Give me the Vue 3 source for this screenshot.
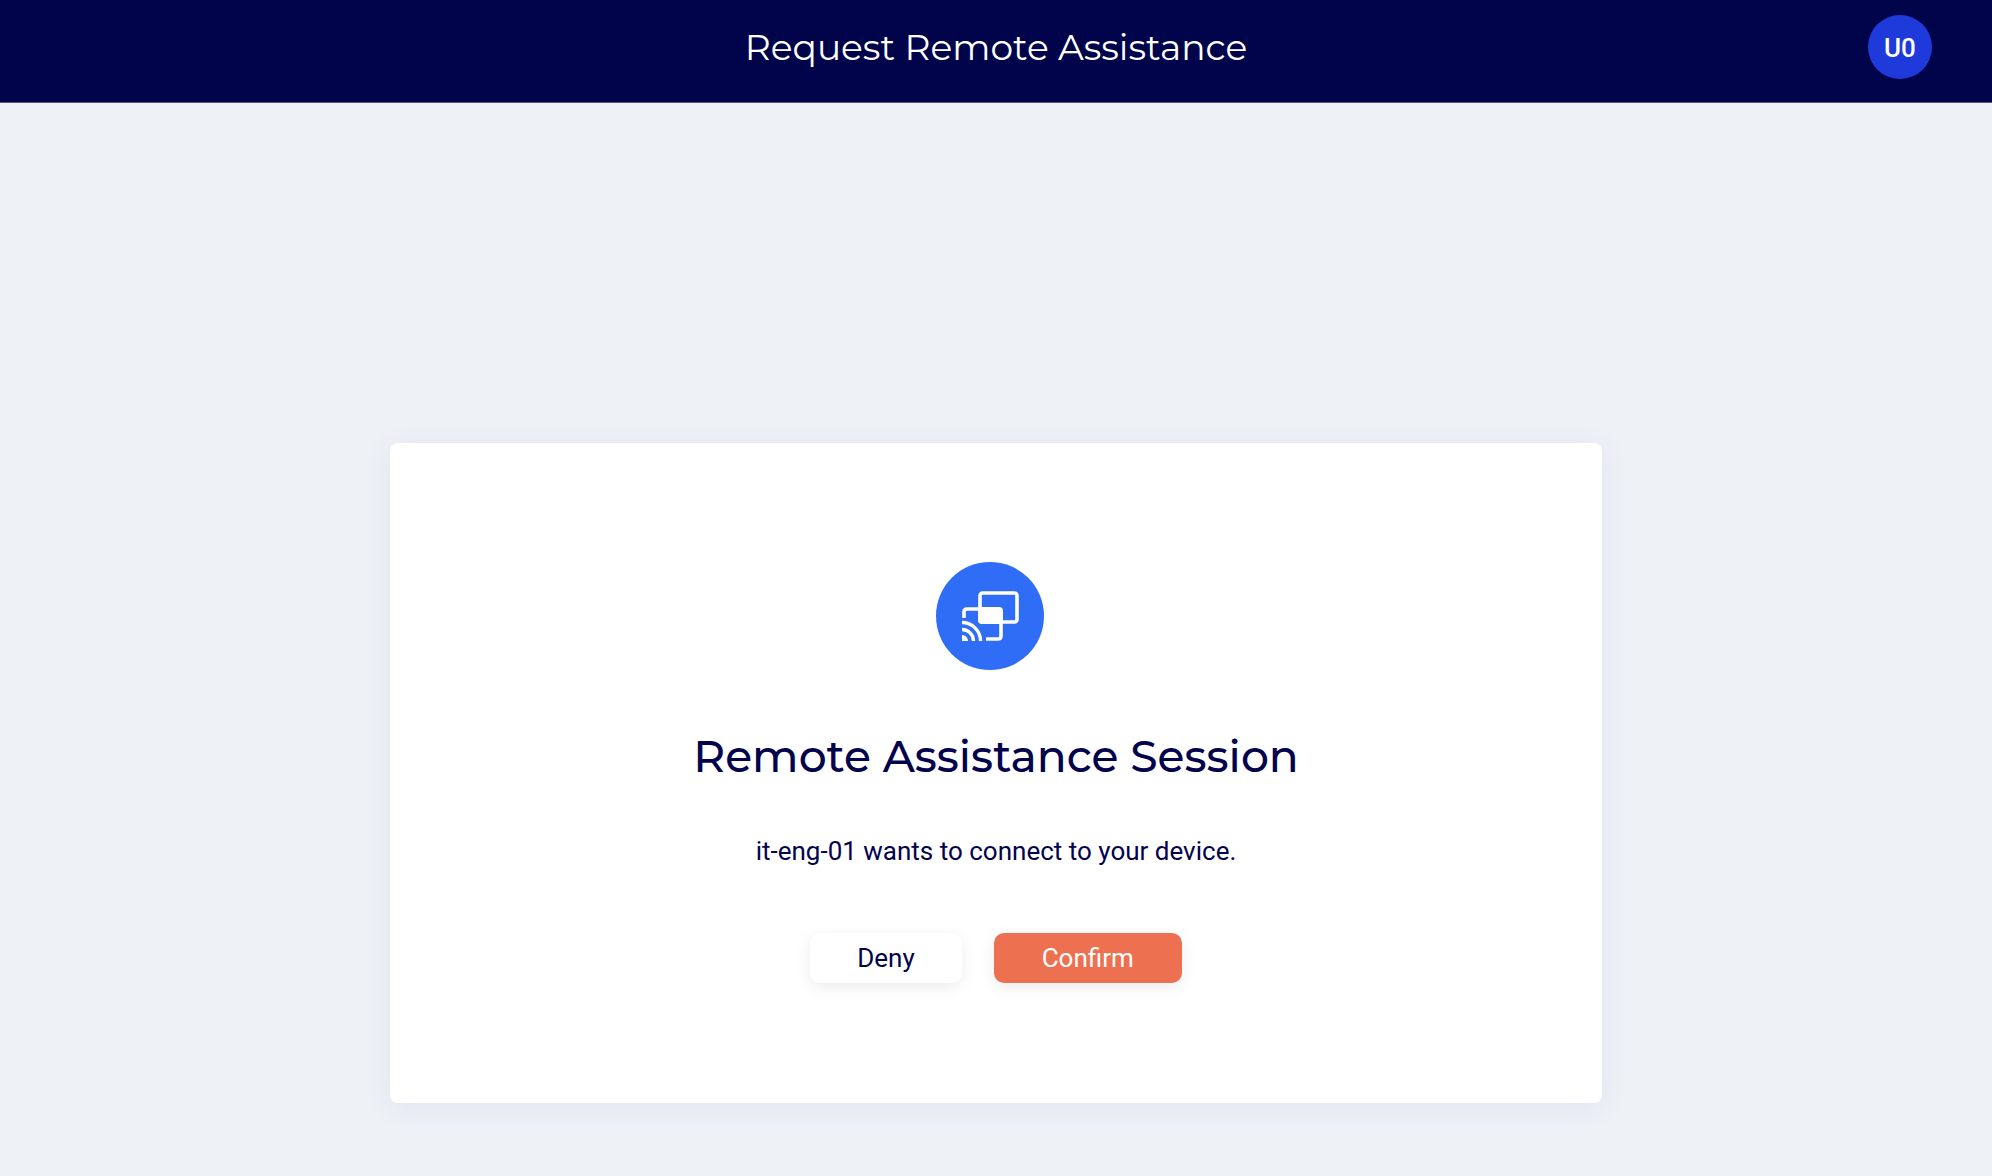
<template>
  <div class="assist-page">

    <!-- ===== Top bar ===== -->
    <header class="top-bar">
      <h1 class="top-title">Request Remote Assistance</h1>
      <button type="button" class="avatar">{{ initials }}</button>
    </header>

    <!-- ===== Session card ===== -->
    <main class="content">
      <section class="card">
        <div class="badge">
          <svg class="badge-icon" viewBox="0 0 58 52" fill="none" aria-hidden="true">
            <!-- front screen -->
            <path d="M3 28V22Q3 19 6 19H18" stroke="#fff" stroke-width="3.6" />
            <path d="M40 33V46Q40 49 37 49H25" stroke="#fff" stroke-width="3.6" />
            <!-- back screen -->
            <rect x="19" y="3" width="37" height="29" rx="2.5" stroke="#fff" stroke-width="3.6" />
            <rect x="17" y="17" width="25" height="17" rx="4" fill="#fff" />
            <!-- cast waves -->
            <path d="M1 45A6 6 0 0 1 7 51H1Z" fill="#fff" />
            <path d="M1 39.5A11.5 11.5 0 0 1 12.5 51" stroke="#fff" stroke-width="3.4" />
            <path d="M1 32.5A18.5 18.5 0 0 1 19.5 51" stroke="#fff" stroke-width="3.4" />
          </svg>
        </div>

        <h2 class="card-title">Remote Assistance Session</h2>
        <p class="card-text">{{ requester }} wants to connect to your device.</p>

        <div class="actions">
          <button type="button" class="btn deny">Deny</button>
          <button type="button" class="btn confirm">Confirm</button>
        </div>
      </section>
    </main>

  </div>
</template>

<script setup>
const initials = 'U0'
const requester = 'it-eng-01'
</script>

<style>
body {
  margin: 0;
  background: #eef1f6;
}
</style>

<style scoped>
.assist-page {
  min-height: 100vh;
  background: #eef1f6;
  color: #03034d;
  font-family: Roboto, sans-serif;
}

/* Top bar */
.top-bar {
  display: grid;
  grid-template-columns: 1fr auto 1fr;
  align-items: center;
  padding: 15px 60px 23px;
  background: #00044b;
  border-bottom: 1px solid #55568a;
}

.top-title {
  grid-column: 2;
  margin: 0;
  font-family: Montserrat, Inter, sans-serif;
  font-size: 36px;
  font-weight: 400;
  line-height: 48px;
  color: #fff;
}

.avatar {
  justify-self: end;
  width: 64px;
  height: 64px;
  padding: 2px 0 0;
  border: 0;
  border-radius: 50%;
  background: #1f3adb;
  color: #fff;
  font-family: inherit;
  font-size: 26px;
  font-weight: 500;
  cursor: pointer;
}

/* Card */
.content {
  display: flex;
  justify-content: center;
  padding: 340px 32px 72px;
}

.card {
  display: flex;
  flex-direction: column;
  align-items: center;
  box-sizing: border-box;
  width: 100%;
  max-width: 1212px;
  padding: 119px 32px 120px;
  border-radius: 8px;
  background: #fff;
  box-shadow: 0 4px 28px rgba(60, 80, 180, 0.08);
}

.badge {
  display: flex;
  align-items: center;
  justify-content: center;
  width: 108px;
  height: 108px;
  margin-right: 12px;
  border-radius: 50%;
  background: #306df6;
}

.badge-icon {
  width: 58px;
  height: 52px;
}

.card-title {
  margin: 58px 0 0;
  font-family: Montserrat, Inter, sans-serif;
  font-size: 44px;
  font-weight: 500;
  line-height: 56px;
  text-align: center;
}

.card-text {
  margin: 51px 0 0;
  font-size: 26px;
  line-height: 32px;
  text-align: center;
}

/* Buttons */
.actions {
  display: flex;
  gap: 32px;
  margin-top: 66px;
}

.btn {
  height: 50px;
  padding: 0 47px;
  border: 0;
  border-radius: 10px;
  font-family: inherit;
  font-size: 26px;
  line-height: 32px;
  box-shadow: 0 4px 16px rgba(0, 0, 0, 0.08);
  cursor: pointer;
}

.deny {
  background: #fff;
  color: #03034d;
}

.confirm {
  padding: 0 48px;
  background: #ed7151;
  color: #fff;
}
</style>
